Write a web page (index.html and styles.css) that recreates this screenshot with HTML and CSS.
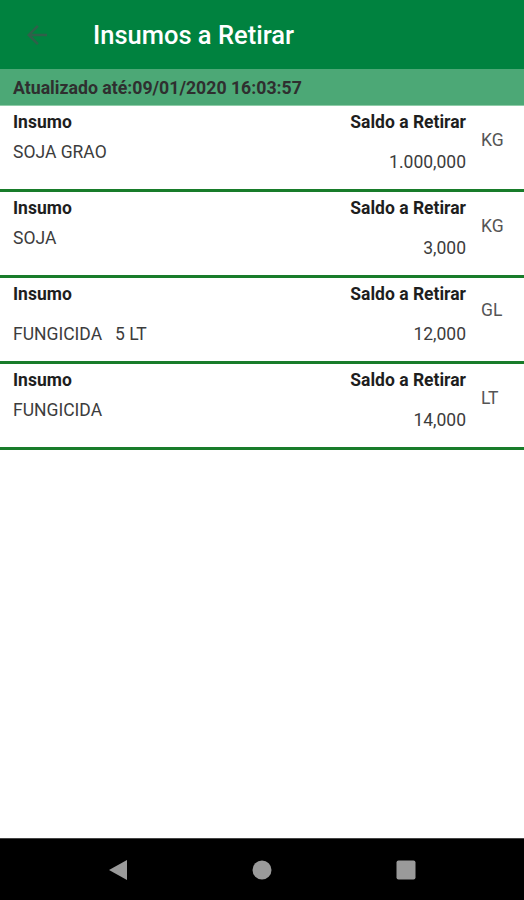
FILE: index.html
```html
<!DOCTYPE html>
<html lang="pt">
<head>
<meta charset="utf-8">
<link rel="stylesheet" href="styles.css">
</head>
<body>
<div class="screen">
  <header class="appbar">
    <svg class="back" viewBox="0 0 24 24" width="30" height="30"><path d="M20 11H7.83l5.59-5.59L12 4l-8 8 8 8 1.41-1.41L7.83 13H20v-2z"/></svg>
    <h1 class="title">Insumos a Retirar</h1>
  </header>
  <div class="updated">Atualizado até:09/01/2020 16:03:57</div>
  <main class="list">
    <div class="item">
      <div class="col-name"><div class="label">Insumo</div><div class="name">SOJA GRAO</div></div>
      <div class="col-value"><div class="label">Saldo a Retirar</div><div class="value">1.000,000</div></div>
      <div class="unit">KG</div>
    </div>
    <div class="item">
      <div class="col-name"><div class="label">Insumo</div><div class="name">SOJA</div></div>
      <div class="col-value"><div class="label">Saldo a Retirar</div><div class="value">3,000</div></div>
      <div class="unit">KG</div>
    </div>
    <div class="item">
      <div class="col-name"><div class="label">Insumo</div><div class="name name-low">FUNGICIDA &nbsp; 5 LT</div></div>
      <div class="col-value"><div class="label">Saldo a Retirar</div><div class="value">12,000</div></div>
      <div class="unit unit-high">GL</div>
    </div>
    <div class="item">
      <div class="col-name"><div class="label">Insumo</div><div class="name">FUNGICIDA</div></div>
      <div class="col-value"><div class="label">Saldo a Retirar</div><div class="value">14,000</div></div>
      <div class="unit">LT</div>
    </div>
  </main>
  <nav class="navbar">
    <svg class="nav-icon" viewBox="0 0 20 20" width="20" height="20"><path d="M19 0 L19 20 L1 10 Z"/></svg>
    <svg class="nav-icon" viewBox="0 0 20 20" width="20" height="20"><circle cx="10" cy="10" r="9.5"/></svg>
    <svg class="nav-icon" viewBox="0 0 20 20" width="20" height="20"><rect x="0.5" y="0.5" width="19" height="19" rx="2"/></svg>
  </nav>
</div>
</body>
</html>
```
FILE: styles.css
```css
* { box-sizing: border-box; }
html, body { margin: 0; padding: 0; }
body { font-family: Roboto, "Noto Sans", "Liberation Sans", sans-serif; background: #fff; }
.screen { display: flex; flex-direction: column; min-height: 100vh; }
.appbar {
  height: 69px;
  background: #00823f;
  display: flex;
  align-items: center;
  padding-left: 22px;
}
.back { fill: #30604a; flex: none; margin-top: 1px; }
.title {
  margin: 0 0 0 41px;
  color: #fff;
  font-size: 25.5px;
  font-weight: 500;
  letter-spacing: 0;
}
.updated {
  height: 37px;
  background: #4ca876;
  border-bottom: 1px solid #8fcca8;
  color: #2f2f2f;
  font-weight: 700;
  font-size: 17.7px;
  display: flex;
  align-items: center;
  padding: 1px 0 0 13px;
}
.list { flex: 1; }
.item {
  height: 86px;
  border-bottom: 3px solid #187c2a;
  display: grid;
  grid-template-columns: 1fr auto 43px;
  column-gap: 15px;
  padding: 6px 0 0 13px;
  font-size: 17.5px;
  line-height: 20px;
}
.label { color: #1e1e1e; font-weight: 700; }
.name { color: #3c3c3c; margin-top: 10px; }
.name-low { margin-top: 20px; }
.col-value { text-align: right; }
.value { color: #3c3c3c; margin-top: 20px; }
.unit { color: #555; margin-top: 18px; }
.unit-high { margin-top: 16px; }
.navbar {
  height: 62px;
  background: #000;
  display: flex;
  align-items: center;
  justify-content: center;
  gap: 124px;
  border-top: 1px solid #444;
}
.nav-icon { fill: #9a9a9a; }
```
